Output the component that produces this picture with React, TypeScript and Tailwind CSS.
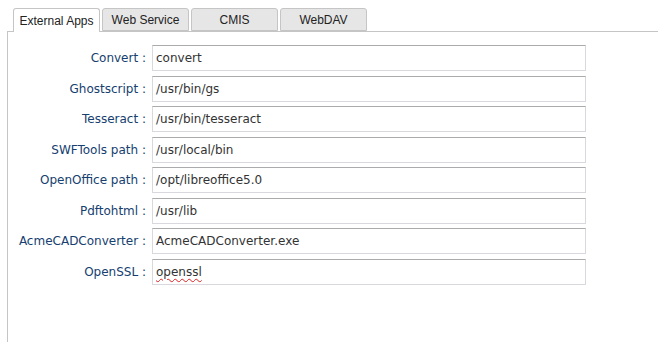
const tabs = ['External Apps', 'Web Service', 'CMIS', 'WebDAV'];

const rows: { label: string; value: string; flagged?: boolean }[] = [
  { label: 'Convert', value: 'convert' },
  { label: 'Ghostscript', value: '/usr/bin/gs' },
  { label: 'Tesseract', value: '/usr/bin/tesseract' },
  { label: 'SWFTools path', value: '/usr/local/bin' },
  { label: 'OpenOffice path', value: '/opt/libreoffice5.0' },
  { label: 'Pdftohtml', value: '/usr/lib' },
  { label: 'AcmeCADConverter', value: 'AcmeCADConverter.exe' },
  { label: 'OpenSSL', value: 'openssl', flagged: true },
];

export default function App() {
  return (
    <div className="w-[658px] h-[342px] overflow-hidden bg-white pt-2 pl-[7px]">
      {/* Tab strip */}
      <div className="flex gap-[2px] pl-[6px] h-[23px] relative z-10">
        {tabs.map((t, i) => (
          <div
            key={t}
            className={
              i === 0
                ? 'w-[87px] h-[24px] flex items-center justify-center rounded-t-[3px] border border-b-0 border-[#c5c5c5] bg-white text-[12px] text-[#222]'
                : 'w-[87px] h-[23px] flex items-center justify-center rounded-t-[3px] border border-[#c5c5c5] bg-[#e6e6e6] text-[12px] text-[#222]'
            }
            style={{ fontFamily: '"Liberation Sans", Arial, sans-serif' }}
          >
            {t}
          </div>
        ))}
      </div>

      {/* Panel */}
      <div
        className="w-[660px] h-[320px] border-t border-l border-[#c5c5c5] pt-[13px] flex flex-col gap-[4.5px]"
        style={{ fontFamily: '"DejaVu Sans", sans-serif' }}
      >
        {rows.map((r) => (
          <div key={r.label} className="flex items-center h-[26px]">
            <div className="w-[138px] text-right text-[12px] text-[#15406f] whitespace-nowrap">
              {r.label} :
            </div>
            <div className="ml-[6px] w-[434px] h-[26px] flex items-center pl-[3px] border border-[#d8d8de] border-t-[#ababab] text-[12px] text-[#333]">
              <span className={r.flagged ? 'underline decoration-wavy decoration-[#e02020] decoration-1 underline-offset-2' : ''}>
                {r.value}
              </span>
            </div>
          </div>
        ))}
      </div>
    </div>
  );
}
